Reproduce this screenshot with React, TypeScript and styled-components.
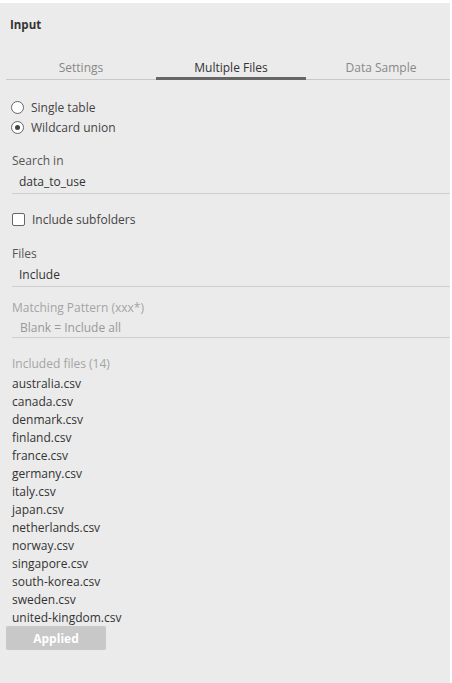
import React from 'react';
import styled, { createGlobalStyle } from 'styled-components';

const GlobalStyle = createGlobalStyle`
  html, body {
    margin: 0;
    padding: 0;
    background: #ffffff;
  }
  body {
    font-family: "Open Sans", "Noto Sans", "Liberation Sans", sans-serif;
    font-size: 12px;
  }
`;

const Panel = styled.div`
  margin: 3px 2px 0 0;
  height: 680px;
  background: #ebebeb;
  display: flex;
  flex-direction: column;
  box-sizing: border-box;
`;

const Header = styled.div`
  padding: 14px 0 0 10px;
  height: 44px;
  box-sizing: border-box;
  font-size: 11.5px;
  font-weight: 700;
  color: #333;
`;

const Tabs = styled.div`
  display: grid;
  grid-template-columns: repeat(3, 150px);
  margin-left: 6px;
  border-bottom: 1px solid #c8c8c8;
`;

const Tab = styled.div<{ $active?: boolean }>`
  height: 33px;
  box-sizing: border-box;
  padding-top: 12px;
  text-align: center;
  font-size: 12px;
  color: ${(p) => (p.$active ? '#333' : '#888')};
  border-bottom: 3px solid ${(p) => (p.$active ? '#666' : 'transparent')};
  margin-bottom: -1px;
`;

const Body = styled.div`
  display: flex;
  flex-direction: column;
  padding: 17px 0 0 12px;
`;

const OptionRow = styled.label`
  display: flex;
  align-items: center;
  height: 20px;
  color: #444;
  font-size: 12px;
`;

const Radio = styled.span<{ $checked?: boolean }>`
  width: 13px;
  height: 13px;
  margin-left: -1px;
  border: 1px solid #666;
  border-radius: 50%;
  box-sizing: border-box;
  background: #fff;
  display: flex;
  align-items: center;
  justify-content: center;
  margin-right: 7px;

  &::after {
    content: '';
    width: 5px;
    height: 5px;
    border-radius: 50%;
    background: ${(p) => (p.$checked ? '#444' : 'transparent')};
  }
`;

const Checkbox = styled.span`
  width: 13px;
  height: 13px;
  border: 1px solid #666;
  border-radius: 2px;
  box-sizing: border-box;
  background: #fff;
  margin-right: 7px;
`;

const Field = styled.div<{ $top: number }>`
  margin-top: ${(p) => p.$top}px;
  display: flex;
  flex-direction: column;
`;

const Label = styled.div<{ $muted?: boolean }>`
  height: 20px;
  line-height: 20px;
  color: ${(p) => (p.$muted ? '#a4a4a4' : '#555')};
`;

const Value = styled.div<{ $muted?: boolean }>`
  height: ${(p) => (p.$muted ? 19 : 22)}px;
  line-height: ${(p) => (p.$muted ? 19 : 22)}px;
  padding-left: ${(p) => (p.$muted ? 8 : 7)}px;
  color: ${(p) => (p.$muted ? '#999' : '#333')};
  border-bottom: 1px solid #cfcfcf;
`;

const FileList = styled.div`
  display: flex;
  flex-direction: column;
  padding-top: 1px;
`;

const FileItem = styled.div`
  height: 18px;
  line-height: 18px;
  color: #333;
`;

const ApplyButton = styled.button`
  margin: -1px 0 0 -6px;
  width: 100px;
  height: 24px;
  border: none;
  border-radius: 2px;
  background: #c8c8c8;
  color: #fff;
  font-family: inherit;
  font-size: 12px;
  font-weight: 700;
  padding: 0;
`;

const files = [
  'australia.csv',
  'canada.csv',
  'denmark.csv',
  'finland.csv',
  'france.csv',
  'germany.csv',
  'italy.csv',
  'japan.csv',
  'netherlands.csv',
  'norway.csv',
  'singapore.csv',
  'south-korea.csv',
  'sweden.csv',
  'united-kingdom.csv',
];

export default function App() {
  return (
    <>
      <GlobalStyle />
      <Panel>
        <Header>Input</Header>
        <Tabs>
          <Tab>Settings</Tab>
          <Tab $active>Multiple Files</Tab>
          <Tab>Data Sample</Tab>
        </Tabs>
        <Body>
          <OptionRow>
            <Radio />
            Single table
          </OptionRow>
          <OptionRow>
            <Radio $checked />
            Wildcard union
          </OptionRow>

          <Field $top={14}>
            <Label>Search in</Label>
            <Value>data_to_use</Value>
          </Field>

          <Field $top={15}>
            <OptionRow>
              <Checkbox />
              Include subfolders
            </OptionRow>
          </Field>

          <Field $top={15}>
            <Label>Files</Label>
            <Value>Include</Value>
          </Field>

          <Field $top={11}>
            <Label $muted>Matching Pattern (xxx*)</Label>
            <Value $muted>Blank = Include all</Value>
          </Field>

          <Field $top={16}>
            <Label $muted>Included files (14)</Label>
            <FileList>
              {files.map((f) => (
                <FileItem key={f}>{f}</FileItem>
              ))}
            </FileList>
          </Field>

          <ApplyButton>Applied</ApplyButton>
        </Body>
      </Panel>
    </>
  );
}
